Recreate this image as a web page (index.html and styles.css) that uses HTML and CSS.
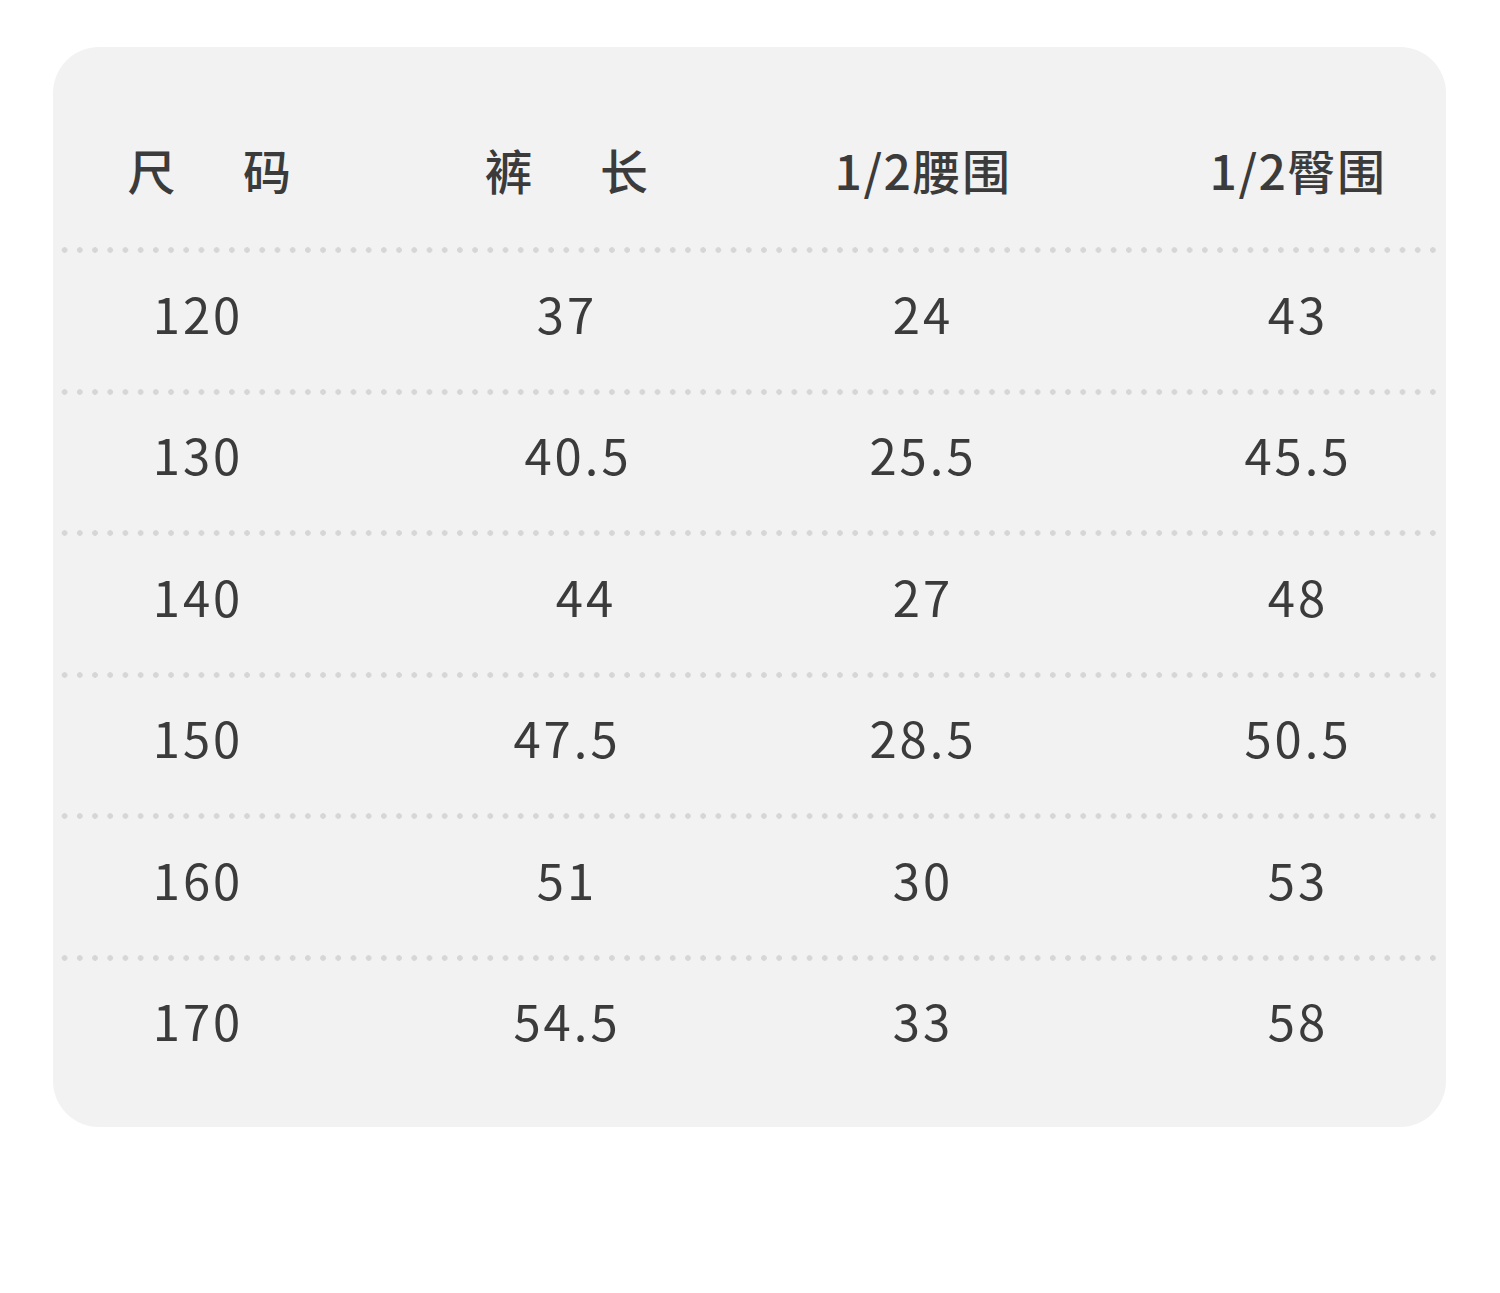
FILE: index.html
```html
<!DOCTYPE html>
<html lang="zh-CN">
<head>
<meta charset="utf-8">
<title>尺码表</title>
<link rel="stylesheet" href="styles.css">
</head>
<body>
<div class="card">
  <div class="row head">
    <div class="cell c1 h1"><span>尺</span><span>码</span></div>
    <div class="cell c2"><span>裤</span><span>长</span></div>
    <div class="cell c3">1/2腰围</div>
    <div class="cell c4">1/2臀围</div>
  </div>
  <div class="dots"></div>
  <div class="row">
    <div class="cell c1">120</div>
    <div class="cell c2">37</div>
    <div class="cell c3">24</div>
    <div class="cell c4">43</div>
  </div>
  <div class="dots"></div>
  <div class="row">
    <div class="cell c1">130</div>
    <div class="cell c2 s10">40.5</div>
    <div class="cell c3">25.5</div>
    <div class="cell c4">45.5</div>
  </div>
  <div class="dots"></div>
  <div class="row">
    <div class="cell c1">140</div>
    <div class="cell c2 s18">44</div>
    <div class="cell c3">27</div>
    <div class="cell c4">48</div>
  </div>
  <div class="dots"></div>
  <div class="row">
    <div class="cell c1">150</div>
    <div class="cell c2">47.5</div>
    <div class="cell c3">28.5</div>
    <div class="cell c4">50.5</div>
  </div>
  <div class="dots"></div>
  <div class="row">
    <div class="cell c1">160</div>
    <div class="cell c2">51</div>
    <div class="cell c3">30</div>
    <div class="cell c4">53</div>
  </div>
  <div class="dots"></div>
  <div class="row">
    <div class="cell c1">170</div>
    <div class="cell c2">54.5</div>
    <div class="cell c3">33</div>
    <div class="cell c4">58</div>
  </div>
</div>
</body>
</html>
```
FILE: styles.css
```css
html, body {
  margin: 0;
  padding: 0;
  background: #ffffff;
}
body {
  width: 1500px;
  height: 1293px;
  font-family: "Noto Sans CJK SC", "Noto Sans", sans-serif;
  color: #3b3b3b;
}
.card {
  box-sizing: border-box;
  margin: 47px 0 0 53px;
  width: 1393px;
  height: 1080px;
  border-radius: 46px;
  background: #f2f2f2;
  padding-top: 64.5px;
}
.row {
  box-sizing: border-box;
  height: 135.5px;
  padding-bottom: 17px;
  display: grid;
  grid-template-columns: 290px 448px 264px 1fr;
  align-items: center;
}
.cell {
  display: flex;
  justify-content: center;
  align-items: center;
  font-size: 49px;
  letter-spacing: 3px;
  line-height: 1;
  white-space: nowrap;
}
.cell.c4 {
  padding-left: 95px;
}
.s10 { padding-left: 22px; }
.s18 { padding-left: 38px; }
.head {
  padding-bottom: 21px;
}
.head .cell {
  font-size: 48px;
  font-weight: 500;
  letter-spacing: 1.5px;
}
.head .c1, .head .c2 {
  gap: 66px;
}
.head .h1 {
  padding-left: 24px;
}
.dots {
  height: 6px;
  margin-left: 4.4px;
  width: 1384px;
  background-image: radial-gradient(circle at center, #d6d6d6 0, #d6d6d6 2.5px, rgba(214,214,214,0) 3.1px);
  background-size: 15.21px 6px;
  background-repeat: repeat-x;
}
```
